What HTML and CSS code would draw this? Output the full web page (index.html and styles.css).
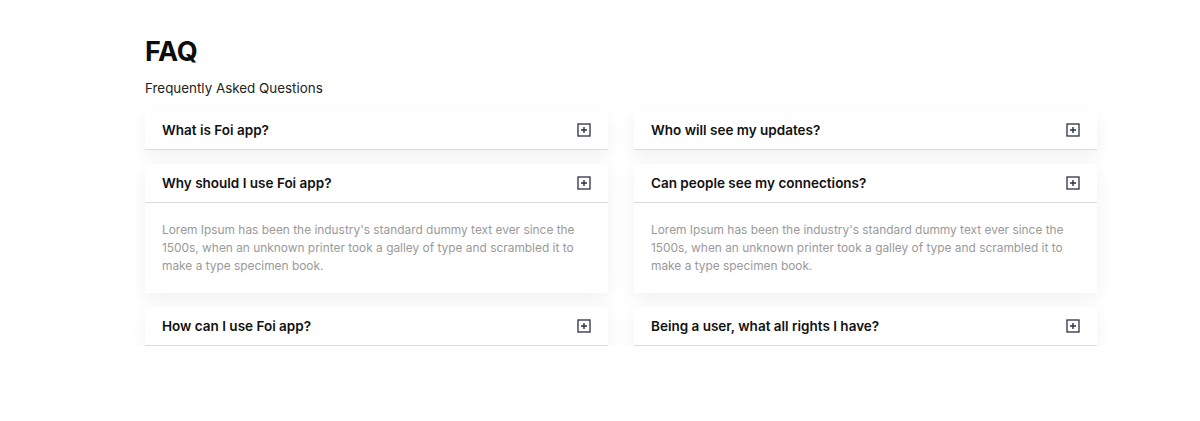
FILE: index.html
```html
<!DOCTYPE html>
<html lang="en">
<head>
<meta charset="utf-8">
<title>FAQ</title>
<link rel="stylesheet" href="styles.css">
</head>
<body>
<section class="faq">
  <h1 class="faq-title">FAQ</h1>
  <p class="faq-sub">Frequently Asked Questions</p>
  <div class="faq-grid">
    <div class="faq-col">
      <div class="card">
        <div class="card-head"><span class="q">What is Foi app?</span><svg class="ico" viewBox="0 0 14 14"><rect x="1" y="1" width="12" height="12" fill="none" stroke="currentColor" stroke-width="1.3"/><path d="M7 4v6M4 7h6" stroke="currentColor" stroke-width="1.4"/></svg></div>
      </div>
      <div class="card">
        <div class="card-head"><span class="q">Why should I use Foi app?</span><svg class="ico" viewBox="0 0 14 14"><rect x="1" y="1" width="12" height="12" fill="none" stroke="currentColor" stroke-width="1.3"/><path d="M7 4v6M4 7h6" stroke="currentColor" stroke-width="1.4"/></svg></div>
        <div class="card-body">Lorem Ipsum has been the industry's standard dummy text ever since the 1500s, when an unknown printer took a galley of type and scrambled it to make a type specimen book.</div>
      </div>
      <div class="card">
        <div class="card-head"><span class="q">How can I use Foi app?</span><svg class="ico" viewBox="0 0 14 14"><rect x="1" y="1" width="12" height="12" fill="none" stroke="currentColor" stroke-width="1.3"/><path d="M7 4v6M4 7h6" stroke="currentColor" stroke-width="1.4"/></svg></div>
      </div>
    </div>
    <div class="faq-col">
      <div class="card">
        <div class="card-head"><span class="q">Who will see my updates?</span><svg class="ico" viewBox="0 0 14 14"><rect x="1" y="1" width="12" height="12" fill="none" stroke="currentColor" stroke-width="1.3"/><path d="M7 4v6M4 7h6" stroke="currentColor" stroke-width="1.4"/></svg></div>
      </div>
      <div class="card">
        <div class="card-head"><span class="q">Can people see my connections?</span><svg class="ico" viewBox="0 0 14 14"><rect x="1" y="1" width="12" height="12" fill="none" stroke="currentColor" stroke-width="1.3"/><path d="M7 4v6M4 7h6" stroke="currentColor" stroke-width="1.4"/></svg></div>
        <div class="card-body">Lorem Ipsum has been the industry's standard dummy text ever since the 1500s, when an unknown printer took a galley of type and scrambled it to make a type specimen book.</div>
      </div>
      <div class="card">
        <div class="card-head"><span class="q">Being a user, what all rights I have?</span><svg class="ico" viewBox="0 0 14 14"><rect x="1" y="1" width="12" height="12" fill="none" stroke="currentColor" stroke-width="1.3"/><path d="M7 4v6M4 7h6" stroke="currentColor" stroke-width="1.4"/></svg></div>
      </div>
    </div>
  </div>
</section>
</body>
</html>
```

FILE: styles.css
```css
html, body {
  margin: 0;
  padding: 0;
  background: #ffffff;
}
body {
  font-family: Inter, "Liberation Sans", sans-serif;
  color: #111;
}
.faq {
  width: 952px;
  margin-left: 145px;
  padding-top: 36px;
}
.faq-title {
  margin: 0;
  font-size: 27px;
  line-height: 32px;
  font-weight: 700;
  letter-spacing: -0.3px;
  color: #0d0d0d;
}
.faq-sub {
  margin: 10px 0 0;
  font-size: 13.4px;
  line-height: 20px;
  color: #222;
}
.faq-grid {
  display: grid;
  grid-template-columns: 463px 463px;
  column-gap: 26px;
  margin-top: 13px;
}
.faq-col {
  display: flex;
  flex-direction: column;
  gap: 14px;
}
.card {
  background: #fff;
  box-shadow: 0 6px 18px rgba(0, 0, 0, 0.06);
}
.card-head {
  display: flex;
  align-items: center;
  justify-content: space-between;
  height: 38px;
  padding: 0 17px;
  border-bottom: 1px solid #dcdcdc;
}
.q {
  font-size: 13.5px;
  font-weight: 600;
  color: #111;
}
.ico {
  width: 14px;
  height: 14px;
  color: #2b3045;
}
.card-body {
  padding: 18px 30px 18px 17px;
  font-size: 11.9px;
  line-height: 18px;
  color: #9a9a9a;
}
```
